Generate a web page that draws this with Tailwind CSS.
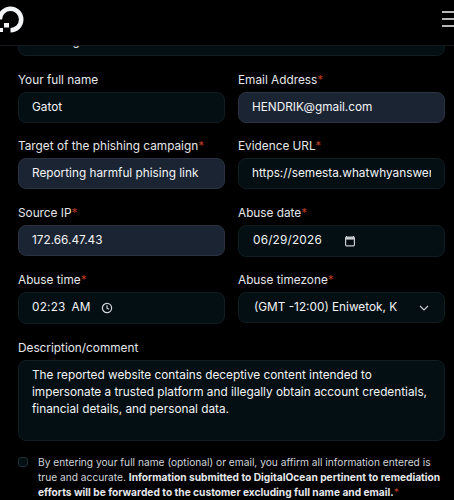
<!doctype html>
<html>
<head>
<meta charset="utf-8">
<script src="https://cdn.jsdelivr.net/npm/@tailwindcss/browser@4"></script>
</head>
<body class="bg-black overflow-hidden">
<div class="w-[454px] h-[500px] overflow-hidden bg-black font-['Inter',sans-serif] text-[#e5e7eb] relative">
  <header class="h-[46px] bg-black border-b border-[#15191e] flex justify-between relative z-10 overflow-hidden">
    <svg class="w-[24px] h-[46px]" viewBox="0 0 24 46">
      <path d="M-0.2 19.5 A10.7 10.7 0 1 1 10.5 30.2" fill="none" stroke="#f3f4f6" stroke-width="4.6"/>
      <rect x="4" y="23" width="5" height="4.5" fill="#f3f4f6"/>
      <rect x="0" y="28" width="3" height="4" fill="#f3f4f6"/>
    </svg>
    <svg class="w-[12px] h-[46px]" viewBox="0 0 12 46"><path d="M0 12H12M0 19H12M0 26H12" stroke="#f3f4f6" stroke-width="1.6"/></svg>
  </header>
  <div class="-mt-[46px] pl-[18px] pr-[9px] grid grid-cols-2 gap-x-[13px] text-[11.8px]">
    <div class="col-span-2 h-[56px] bg-[#030f13] border border-[#101d21] rounded-lg flex items-end px-[13px] pb-[4px] text-[#f3f4f6]">Phishing</div>
    <div class="mt-[14px]"><div class="leading-[21px] mb-[1px]">Your full name</div><div class="h-[31px] bg-[#030f13] border border-[#101d21] rounded-lg flex items-center px-[13px] text-[#f3f4f6]">Gatot</div></div>
    <div class="mt-[14px]"><div class="leading-[21px] mb-[1px]">Email Address<span class="text-[#b93a22]">*</span></div><div class="h-[31px] bg-[#1b2433] border border-[#2a3240] rounded-lg flex items-center px-[13px] text-[#f3f4f6]">HENDRIK@gmail.com</div></div>
    <div class="mt-[13px]"><div class="leading-[21px] mb-[1px]">Target of the phishing campaign<span class="text-[#b93a22]">*</span></div><div class="h-[31px] bg-[#1b2433] border border-[#2a3240] rounded-lg flex items-center px-[13px] text-[#f3f4f6] whitespace-nowrap overflow-hidden">Reporting harmful phising link</div></div>
    <div class="mt-[13px]"><div class="leading-[21px] mb-[1px]">Evidence URL<span class="text-[#b93a22]">*</span></div><div class="h-[31px] bg-[#030f13] border border-[#101d21] rounded-lg flex items-center px-[13px] text-[#f3f4f6]"><span class="block overflow-hidden whitespace-nowrap">https://semesta.whatwhyanswers.com</span></div></div>
    <div class="mt-[14px]"><div class="leading-[21px] mb-[1px]">Source IP<span class="text-[#b93a22]">*</span></div><div class="h-[31px] bg-[#1b2433] border border-[#2a3240] rounded-lg flex items-center px-[13px] text-[#f3f4f6]">172.66.47.43</div></div>
    <div class="mt-[14px]"><div class="leading-[21px] mb-[1px]">Abuse date<span class="text-[#b93a22]">*</span></div><div class="h-[32px] bg-[#030f13] border border-[#101d21] rounded-lg flex items-center pl-[14px] text-[#f3f4f6] tracking-[0.2px]">06/29/2026<svg class="w-[12px] h-[12px] ml-[22px]" viewBox="0 0 12 12"><path d="M2.5 1V2.5M9.5 1V2.5" stroke="#c8cbd0" stroke-width="1.2"/><rect x="1.6" y="2.2" width="8.8" height="8.6" rx="1" fill="none" stroke="#c8cbd0" stroke-width="1.2"/><rect x="1.6" y="2.2" width="8.8" height="2.4" fill="#c8cbd0"/></svg></div></div>
    <div class="mt-[13px]"><div class="leading-[21px] mb-[1px]">Abuse time<span class="text-[#b93a22]">*</span></div><div class="h-[32px] bg-[#030f13] border border-[#101d21] rounded-lg flex items-center pl-[13px] text-[#f3f4f6] tracking-[0.2px]"><span>02:23</span><span class="ml-[6px]">AM</span><svg class="w-[12px] h-[12px] ml-[10px]" viewBox="0 0 12 12"><circle cx="6" cy="6" r="4.6" fill="none" stroke="#d5d7db" stroke-width="1.2"/><path d="M6 3.2V6.2L8 7.3" fill="none" stroke="#d5d7db" stroke-width="1.1"/></svg></div></div>
    <div class="mt-[13px]"><div class="leading-[21px] mb-[1px]">Abuse timezone<span class="text-[#b93a22]">*</span></div><div class="h-[31px] bg-[#030f13] border border-[#101d21] rounded-lg flex items-center justify-between pl-[15px] pr-[15px] text-[#f3f4f6]"><span>(GMT -12:00) Eniwetok, K</span><svg class="w-[10px] h-[6px]" viewBox="0 0 10 6"><path d="M1 1L5 5L9 1" fill="none" stroke="#c8cbd0" stroke-width="1.2"/></svg></div></div>
    <div class="col-span-2 mt-[14px]"><div class="leading-[21px] mb-[1px]">Description/comment</div><div class="h-[81px] bg-[#030f13] border border-[#101d21] rounded-lg px-[13px] py-[6px] leading-[17px] text-[#f3f4f6]">The reported website contains deceptive content intended to impersonate a trusted platform and illegally obtain account credentials, financial details, and personal data.</div></div>
    <div class="col-span-2 mt-[14px] flex gap-[10px]"><div class="w-[10px] h-[10px] mt-[2px] shrink-0 bg-[#030f13] border border-[#1d3036] rounded-[3px]"></div><div class="text-[10.2px] leading-[15px] text-[#d1d5db]">By entering your full name (optional) or email, you affirm all information entered is true and accurate. <b class="font-bold text-[#e5e7eb]">Information submitted to DigitalOcean pertinent to remediation efforts will be forwarded to the customer excluding full name and email.</b><span class="text-[#b93a22]">*</span></div></div>
  </div>
</div>
</body>
</html>
